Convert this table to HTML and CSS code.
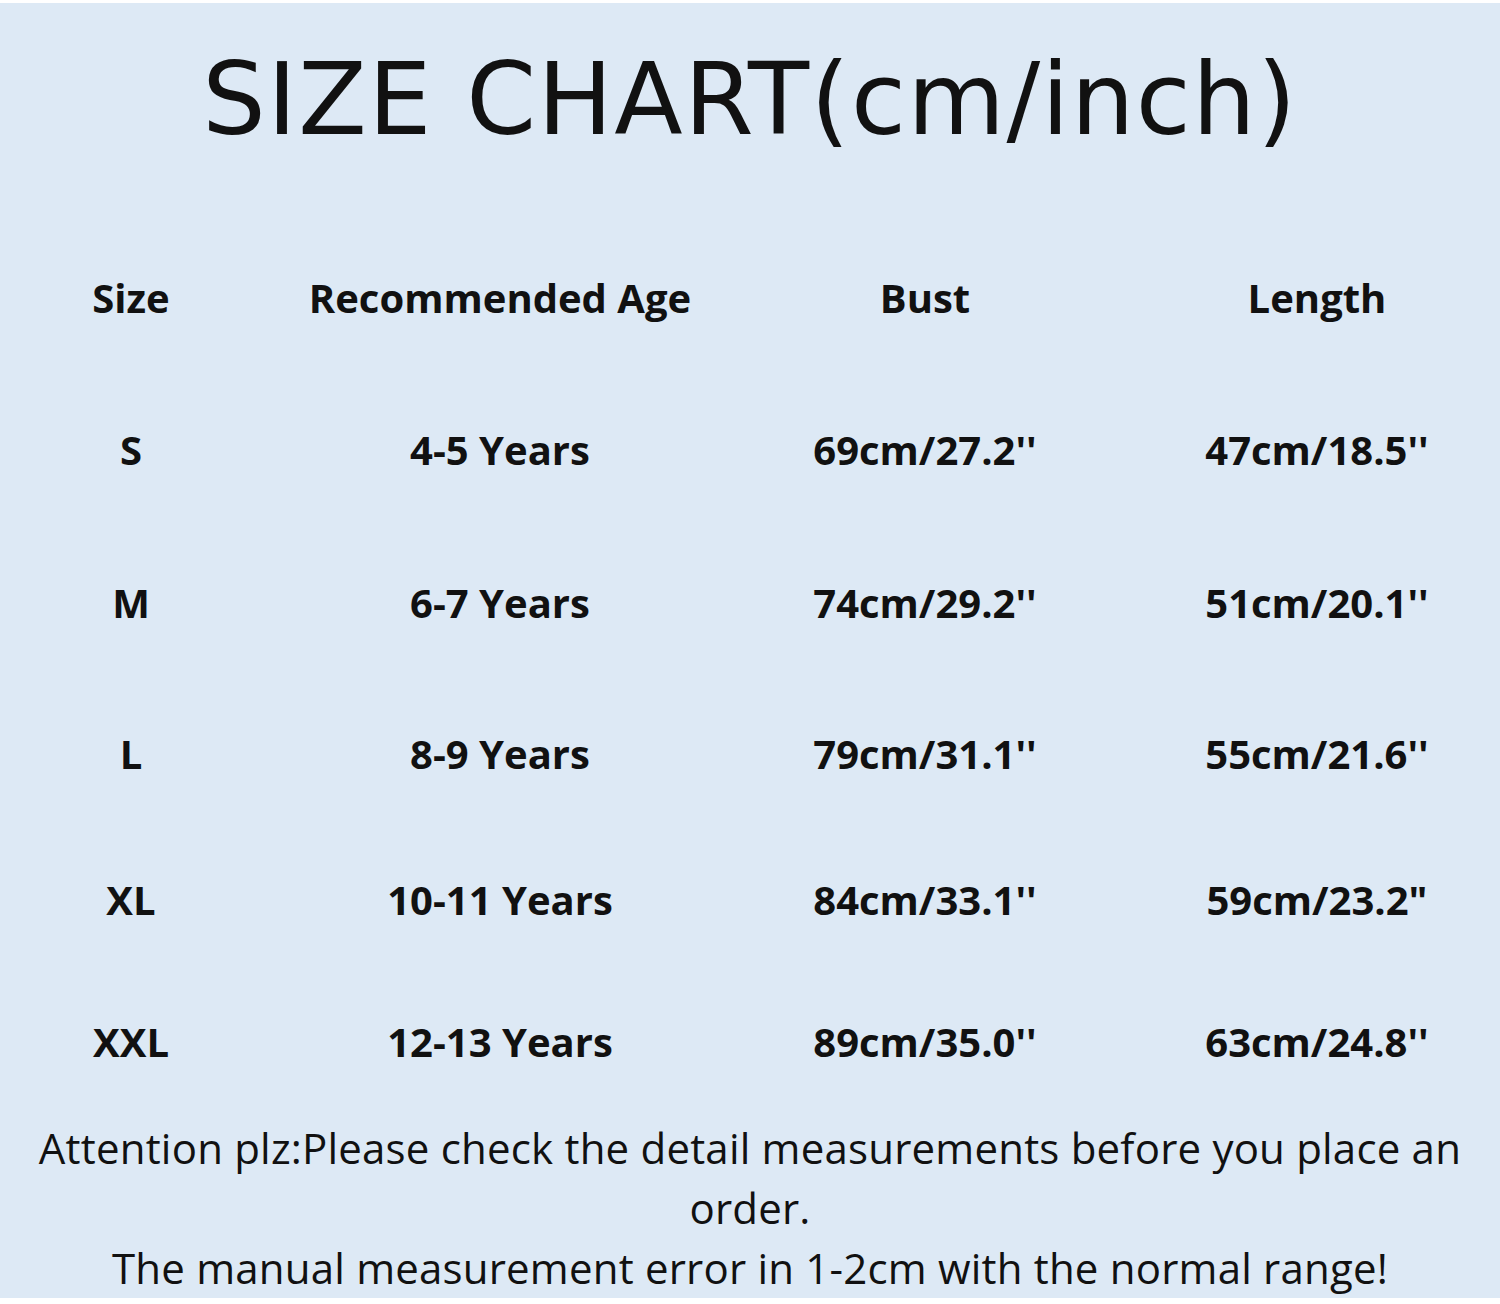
FILE: index.html
```html
<!DOCTYPE html>
<html lang="en">
<head>
<meta charset="utf-8">
<title>Size Chart</title>
<link rel="stylesheet" href="styles.css">
</head>
<body>
<main class="sheet">
  <h1 class="title">SIZE CHART(cm/inch)</h1>
  <div class="chart">
    <div class="cell c1 head">Size</div>
    <div class="cell c2 head">Recommended Age</div>
    <div class="cell c3 head">Bust</div>
    <div class="cell c4 head">Length</div>

    <div class="cell c1">S</div>
    <div class="cell c2">4-5 Years</div>
    <div class="cell c3">69cm/27.2''</div>
    <div class="cell c4">47cm/18.5''</div>

    <div class="cell c1">M</div>
    <div class="cell c2">6-7 Years</div>
    <div class="cell c3">74cm/29.2''</div>
    <div class="cell c4">51cm/20.1''</div>

    <div class="cell c1">L</div>
    <div class="cell c2">8-9 Years</div>
    <div class="cell c3">79cm/31.1''</div>
    <div class="cell c4">55cm/21.6''</div>

    <div class="cell c1">XL</div>
    <div class="cell c2">10-11 Years</div>
    <div class="cell c3">84cm/33.1''</div>
    <div class="cell c4">59cm/23.2"</div>

    <div class="cell c1">XXL</div>
    <div class="cell c2">12-13 Years</div>
    <div class="cell c3">89cm/35.0''</div>
    <div class="cell c4">63cm/24.8''</div>
  </div>
  <p class="note">Attention plz:Please check the detail measurements before you place an<br>order.<br>The manual measurement error in 1-2cm with the normal range!</p>
</main>
</body>
</html>
```
FILE: styles.css
```css
html, body {
  margin: 0;
  padding: 0;
  background: #ffffff;
}
body {
  width: 1500px;
  height: 1304px;
  overflow: hidden;
}
.sheet {
  margin-top: 3px;
  height: 1295px;
  background: #dde9f5;
  color: #111111;
  display: flex;
  flex-direction: column;
  align-items: stretch;
}
.title {
  margin: 0;
  height: 219px;
  box-sizing: border-box;
  padding-top: 42px;
  text-align: center;
  font-family: "DejaVu Sans", sans-serif;
  font-weight: normal;
  font-size: 100px;
  line-height: 110px;
  letter-spacing: 1.5px;
}
.chart {
  display: grid;
  grid-template-columns: 262px 476px 374px 1fr;
  grid-template-rows: 152px 152px 154px 148px 144px 140px;
  font-family: "Open Sans", sans-serif;
  font-weight: 700;
  font-size: 40px;
  letter-spacing: 0;
}
.cell {
  display: flex;
  align-items: center;
  justify-content: center;
}
.c4 {
  padding-left: 22px;
}
.note {
  margin: 7px 0 0;
  text-align: center;
  font-family: "Open Sans", sans-serif;
  font-size: 42px;
  line-height: 60px;
  letter-spacing: 0.2px;
}
```
